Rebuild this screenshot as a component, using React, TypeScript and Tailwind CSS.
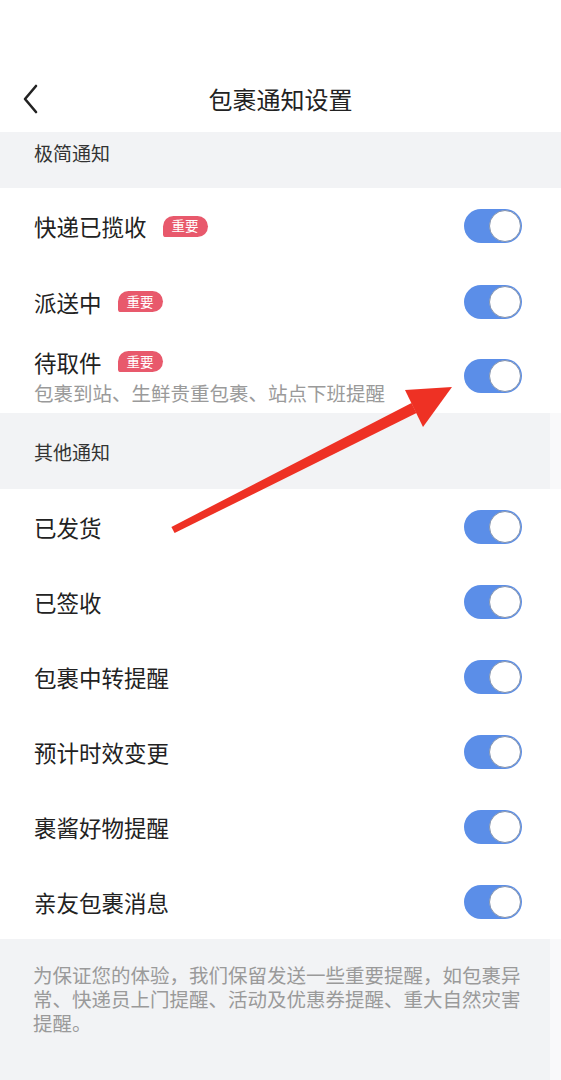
import React from 'react';

interface NoticeItem {
  title: string;
  important?: boolean;
  desc?: string;
  height: string;
}

const simpleItems: NoticeItem[] = [
  { title: '快递已揽收', important: true, height: 'h-[76px]' },
  { title: '派送中', important: true, height: 'h-[75px]' },
  { title: '待取件', important: true, desc: '包裹到站、生鲜贵重包裹、站点下班提醒', height: 'h-[74px]' },
];

const otherItems: NoticeItem[] = [
  { title: '已发货', height: 'h-[75px]' },
  { title: '已签收', height: 'h-[75px]' },
  { title: '包裹中转提醒', height: 'h-[75px]' },
  { title: '预计时效变更', height: 'h-[75px]' },
  { title: '裹酱好物提醒', height: 'h-[75px]' },
  { title: '亲友包裹消息', height: 'h-[75px]' },
];

const Toggle: React.FC = () => (
  <div className="w-[58px] h-[34px] rounded-full bg-[#5b8ee8] flex justify-end items-center p-[1px] shrink-0">
    <div className="w-[32px] h-[32px] rounded-full bg-white border-[1.5px] border-[#8594ad]" />
  </div>
);

const Badge: React.FC = () => (
  <span className="ml-[16px] inline-flex items-center justify-center w-[45px] h-[21px] rounded-[11px] rounded-bl-[3px] bg-[#e8596c] text-white text-[13.5px] leading-none">
    重要
  </span>
);

const Row: React.FC<{ item: NoticeItem }> = ({ item }) => (
  <div className={`${item.height} bg-white flex items-center justify-between pl-[34px] pr-[39px]`}>
    <div className="flex flex-col">
      <div className="flex items-center">
        <span className="text-[22.5px] leading-[30px] text-[#222]">{item.title}</span>
        {item.important && <Badge />}
      </div>
      {item.desc && (
        <span className="mt-[3px] text-[19.5px] leading-[26px] text-[#9a9a9a]">{item.desc}</span>
      )}
    </div>
    <Toggle />
  </div>
);

export default function App() {
  return (
    <div
      className="relative w-[561px] h-[1080px] overflow-hidden bg-white"
      style={{ fontFamily: '"Noto Sans CJK SC", "Noto Sans", sans-serif' }}
    >
      {/* Nav bar */}
      <div className="h-[132px] bg-white pt-[80px]">
        <div className="grid grid-cols-[60px_1fr_60px] h-[38px] items-center">
          <div className="pl-[21px] flex items-center">
            <svg width="20" height="30" viewBox="0 0 20 30" fill="none">
              <path d="M15 2 L4 15 L15 28" stroke="#222" strokeWidth="2.6" strokeLinecap="round" strokeLinejoin="round" />
            </svg>
          </div>
          <div className="text-center text-[24px] leading-[38px] text-[#222]">包裹通知设置</div>
          <div />
        </div>
      </div>

      {/* 极简通知 */}
      <div className="h-[56px] bg-[#f2f3f5] pl-[34px] pt-[10px]">
        <span className="text-[19px] leading-[20px] text-[#333]">极简通知</span>
      </div>
      {simpleItems.map((item) => (
        <Row key={item.title} item={item} />
      ))}

      {/* 其他通知 */}
      <div className="h-[76px] bg-[#f2f3f5] border-r-[11px] border-[#f9f9fa] pl-[34px] pt-[28px]">
        <span className="text-[19px] leading-[20px] text-[#333]">其他通知</span>
      </div>
      {otherItems.map((item) => (
        <Row key={item.title} item={item} />
      ))}

      {/* Footer note */}
      <div className="h-[141px] bg-[#f2f3f5] border-r-[11px] border-[#f9f9fa] pl-[33px] pr-[22px] pt-[24px]">
        <p className="text-[19.5px] leading-[24px] text-[#9a9a9a]">
          为保证您的体验，我们保留发送一些重要提醒，如包裹异常、快递员上门提醒、活动及优惠券提醒、重大自然灾害提醒。
        </p>
      </div>

      {/* Red annotation arrow */}
      <svg className="absolute inset-0 pointer-events-none" width="561" height="1080" viewBox="0 0 561 1080">
        <polygon points="171.4,526.9 411.5,403.1 416.5,412.9 174.6,533.1" fill="#ee3124" />
        <polygon points="405,390 452,387 423,427" fill="#ee3124" />
      </svg>
    </div>
  );
}
